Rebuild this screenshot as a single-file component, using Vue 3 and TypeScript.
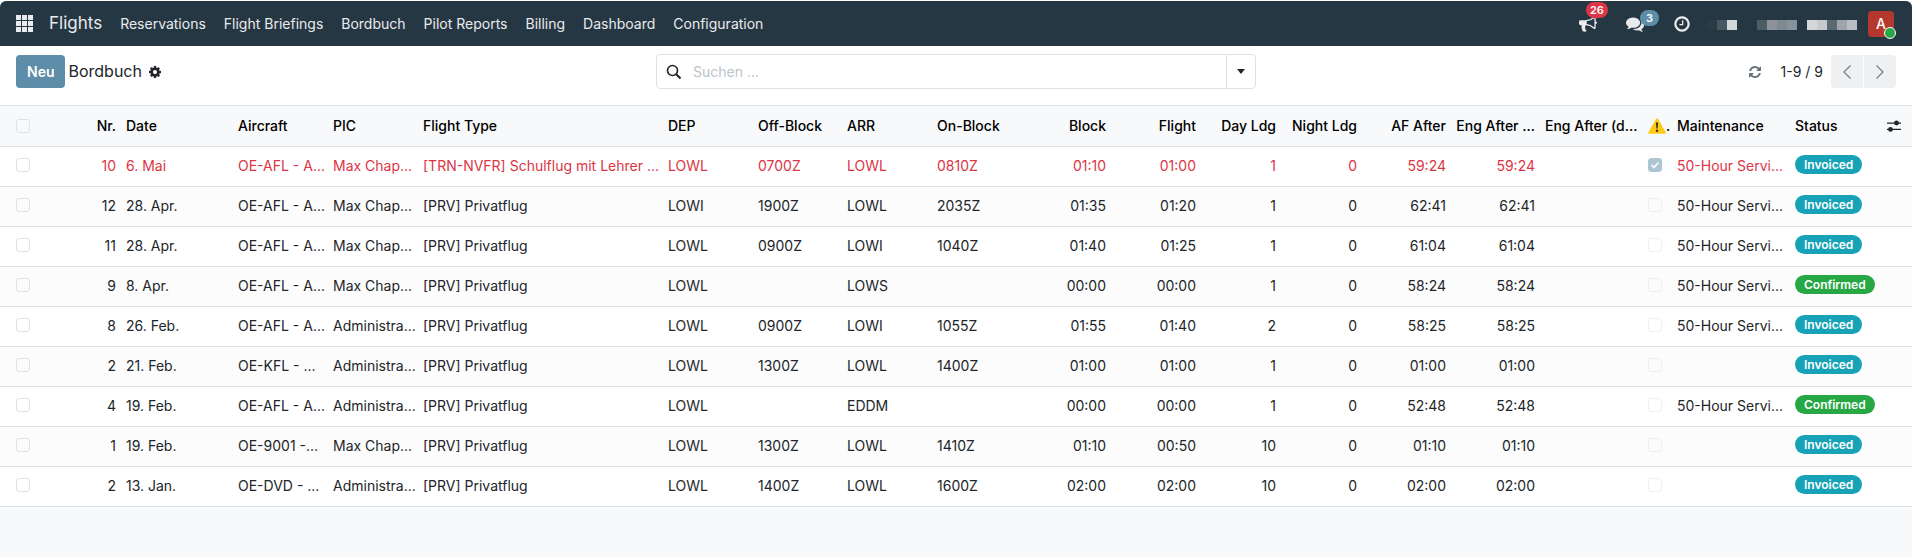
<script setup lang="ts">
import { ref } from 'vue'

interface Column {
  key: string
  label: string
  width: number
  end?: boolean
}

interface Flight {
  nr: number
  date: string
  aircraft: string
  pic: string
  type: string
  dep: string
  off: string
  arr: string
  on: string
  block: string
  flight: string
  day: number
  night: number
  af: string
  eng: string
  warn: boolean
  maintenance: string
  status: 'Invoiced' | 'Confirmed'
}

const menu = ['Reservations', 'Flight Briefings', 'Bordbuch', 'Pilot Reports', 'Billing', 'Dashboard', 'Configuration']

const columns: Column[] = [
  { key: 'nr', label: 'Nr.', width: 81, end: true },
  { key: 'date', label: 'Date', width: 112 },
  { key: 'aircraft', label: 'Aircraft', width: 95 },
  { key: 'pic', label: 'PIC', width: 90 },
  { key: 'type', label: 'Flight Type', width: 245 },
  { key: 'dep', label: 'DEP', width: 90 },
  { key: 'off', label: 'Off-Block', width: 89 },
  { key: 'arr', label: 'ARR', width: 90 },
  { key: 'on', label: 'On-Block', width: 90 },
  { key: 'block', label: 'Block', width: 89, end: true },
  { key: 'flight', label: 'Flight', width: 90, end: true },
  { key: 'day', label: 'Day Ldg', width: 80, end: true },
  { key: 'night', label: 'Night Ldg', width: 81, end: true },
  { key: 'af', label: 'AF After', width: 89, end: true },
  { key: 'eng', label: 'Eng After ...', width: 89, end: true },
  { key: 'engDual', label: 'Eng After (d...', width: 102, end: true },
  { key: 'warn', label: '', width: 30 },
  { key: 'maintenance', label: 'Maintenance', width: 118 },
  { key: 'status', label: 'Status', width: 90 },
]

const administrator = 'Administra...'
const max = 'Max Chap...'
const privat = '[PRV] Privatflug'
const afl = 'OE-AFL - A...'
const service = '50-Hour Servi...'

const flights: Flight[] = [
  { nr: 10, date: '6. Mai', aircraft: afl, pic: max, type: '[TRN-NVFR] Schulflug mit Lehrer ...', dep: 'LOWL', off: '0700Z', arr: 'LOWL', on: '0810Z', block: '01:10', flight: '01:00', day: 1, night: 0, af: '59:24', eng: '59:24', warn: true, maintenance: service, status: 'Invoiced' },
  { nr: 12, date: '28. Apr.', aircraft: afl, pic: max, type: privat, dep: 'LOWI', off: '1900Z', arr: 'LOWL', on: '2035Z', block: '01:35', flight: '01:20', day: 1, night: 0, af: '62:41', eng: '62:41', warn: false, maintenance: service, status: 'Invoiced' },
  { nr: 11, date: '28. Apr.', aircraft: afl, pic: max, type: privat, dep: 'LOWL', off: '0900Z', arr: 'LOWI', on: '1040Z', block: '01:40', flight: '01:25', day: 1, night: 0, af: '61:04', eng: '61:04', warn: false, maintenance: service, status: 'Invoiced' },
  { nr: 9, date: '8. Apr.', aircraft: afl, pic: max, type: privat, dep: 'LOWL', off: '', arr: 'LOWS', on: '', block: '00:00', flight: '00:00', day: 1, night: 0, af: '58:24', eng: '58:24', warn: false, maintenance: service, status: 'Confirmed' },
  { nr: 8, date: '26. Feb.', aircraft: afl, pic: administrator, type: privat, dep: 'LOWL', off: '0900Z', arr: 'LOWI', on: '1055Z', block: '01:55', flight: '01:40', day: 2, night: 0, af: '58:25', eng: '58:25', warn: false, maintenance: service, status: 'Invoiced' },
  { nr: 2, date: '21. Feb.', aircraft: 'OE-KFL - ...', pic: administrator, type: privat, dep: 'LOWL', off: '1300Z', arr: 'LOWL', on: '1400Z', block: '01:00', flight: '01:00', day: 1, night: 0, af: '01:00', eng: '01:00', warn: false, maintenance: '', status: 'Invoiced' },
  { nr: 4, date: '19. Feb.', aircraft: afl, pic: administrator, type: privat, dep: 'LOWL', off: '', arr: 'EDDM', on: '', block: '00:00', flight: '00:00', day: 1, night: 0, af: '52:48', eng: '52:48', warn: false, maintenance: service, status: 'Confirmed' },
  { nr: 1, date: '19. Feb.', aircraft: 'OE-9001 -...', pic: max, type: privat, dep: 'LOWL', off: '1300Z', arr: 'LOWL', on: '1410Z', block: '01:10', flight: '00:50', day: 10, night: 0, af: '01:10', eng: '01:10', warn: false, maintenance: '', status: 'Invoiced' },
  { nr: 2, date: '13. Jan.', aircraft: 'OE-DVD - ...', pic: administrator, type: privat, dep: 'LOWL', off: '1400Z', arr: 'LOWL', on: '1600Z', block: '02:00', flight: '02:00', day: 10, night: 0, af: '02:00', eng: '02:00', warn: false, maintenance: '', status: 'Invoiced' },
]

const query = ref('')
</script>

<template>
  <div class="page">
    <header class="navbar">
      <button class="icon-btn apps" aria-label="Apps">
        <svg width="17" height="17" viewBox="0 0 17 17" fill="currentColor">
          <template v-for="r in 3" :key="r">
            <rect v-for="c in 3" :key="c" :x="(c - 1) * 6" :y="(r - 1) * 6" width="5" height="5" />
          </template>
        </svg>
      </button>
      <a class="brand" href="#">Flights</a>
      <nav class="menu">
        <a v-for="item in menu" :key="item" href="#">{{ item }}</a>
      </nav>
      <div class="systray">
        <button class="icon-btn tray" aria-label="Announcements">
          <svg width="18" height="18" viewBox="0 0 1792 1792" fill="currentColor"><path d="M1664 640q53 0 90.500 37.500t37.500 90.500-37.500 90.500-90.500 37.500v384q0 52-38 90t-90 38q-417-347-812-380-58 19-91 66t-31 100.500 40 92.500q-20 33-23 65.500t6 58 33.500 55 48 50 61.500 50.500q-29 58-111.500 83t-168.500 11.500-132-55.500q-7-23-29.500-87.500t-32-94.500-23-89-15-101 3.500-98.500 22-110.500h-122q-66 0-113-47t-47-113v-192q0-66 47-113t113-47h480q435 0 896-384 52 0 90 38t38 90v384zm-128 604v-954q-394 302-768 343v270q377 42 768 341z" /></svg>
          <span class="count red">26</span>
        </button>
        <button class="icon-btn tray" aria-label="Messages">
          <svg width="18" height="18" viewBox="0 0 1792 1792" fill="currentColor"><path d="M1408 768q0 139-94 257t-256.500 186.500-353.500 68.500q-86 0-176-16-124 88-278 128-36 9-86 16h-3q-11 0-20.500-8t-11.500-21q-1-3-1-6.500t.5-6.500 2-6l2.500-5 3.500-5.500 4-5 4.500-5 4-4.500q5-6 23-25t26-29.500 22.500-29 25-38.500 20.500-44q-124-72-195-177t-71-224q0-139 94-257t256.500-186.500 353.500-68.500 353.500 68.500 256.500 186.500 94 257zm384 256q0 120-71 224.500t-195 176.500q10 24 20.500 44t25 38.500 22.500 29 26 29.500 23 25q1 1 4 4.500t4.500 5 4 5 3.500 5.500l2.500 5 2 6 .5 6.500-1 6.500q-3 14-13 22t-22 7q-50-7-86-16-154-40-278-128-90 16-176 16-271 0-472-132 58 4 88 4 161 0 309-45t264-129q125-92 192-212t67-254q0-77-23-152 129 71 204 178t75 230z" /></svg>
          <span class="count blue">3</span>
        </button>
        <button class="icon-btn tray" aria-label="Activities">
          <svg width="18" height="18" viewBox="0 0 1792 1792" fill="currentColor"><path d="M1024 544v448q0 14-9 23t-23 9h-320q-14 0-23-9t-9-23v-64q0-14 9-23t23-9h224v-352q0-14 9-23t23-9h64q14 0 23 9t9 23zm416 352q0-148-73-273t-198-198-273-73-273 73-198 198-73 273 73 273 198 198 273 73 273-73 198-198 73-273zm224 0q0 209-103 385.500t-279.500 279.500-385.500 103-385.500-103-279.500-279.500-103-385.500 103-385.500 279.500-279.500 385.500-103 385.500 103 279.500 279.500 103 385.500z" /></svg>
        </button>
        <svg class="redacted" width="150" height="10" viewBox="0 0 150 10" shape-rendering="crispEdges" aria-hidden="true">
          <rect x="0" width="10" height="10" fill="#2a3a46" />
          <rect x="10" width="10" height="10" fill="#475860" />
          <rect x="20" width="10" height="10" fill="#d2d7d9" />
          <rect x="50" width="10" height="10" fill="#4d5d66" />
          <rect x="60" width="10" height="10" fill="#8e939b" />
          <rect x="70" width="10" height="10" fill="#7f8a90" />
          <rect x="80" width="10" height="10" fill="#87929a" />
          <rect x="100" width="10" height="10" fill="#d4d6da" />
          <rect x="110" width="10" height="10" fill="#c5cacd" />
          <rect x="120" width="10" height="10" fill="#5a6972" />
          <rect x="130" width="10" height="10" fill="#9fa5ad" />
          <rect x="140" width="10" height="10" fill="#b9bec3" />
        </svg>
        <button class="avatar" aria-label="User menu">A<span class="online"></span></button>
      </div>
    </header>

    <section class="control">
      <div class="left">
        <button class="new">Neu</button>
        <span class="title">Bordbuch</span>
        <button class="icon-btn gear" aria-label="Actions">
          <svg width="14" height="14" viewBox="0 0 1792 1792" fill="currentColor"><path d="M1152 896q0-106-75-181t-181-75-181 75-75 181 75 181 181 75 181-75 75-181zm512-109v222q0 12-8 23t-20 13l-185 28q-19 54-39 91 35 50 107 138 10 12 10 25t-9 23q-27 37-99 108t-94 71q-12 0-26-9l-138-108q-44 23-91 38-16 136-29 186-7 28-36 28h-222q-14 0-24.500-8.500t-11.500-21.500l-28-184q-49-16-90-37l-141 107q-10 9-25 9-14 0-25-11-126-114-165-168-7-10-7-23 0-12 8-23 15-21 51-66.500t54-70.500q-27-50-41-99l-183-27q-13-2-21-12.500t-8-23.500v-222q0-12 8-23t19-13l186-28q14-46 39-92-40-57-107-138-10-12-10-24 0-10 9-23 26-36 98.500-107.500t94.500-71.500q13 0 26 10l138 107q44-23 91-38 16-136 29-186 7-28 36-28h222q14 0 24.500 8.500t11.500 21.500l28 184q49 16 90 37l142-107q9-9 24-9 13 0 25 10 129 119 165 170 7 8 7 22 0 12-8 23-15 21-51 66.500t-54 70.500q26 50 41 98l183 28q13 2 21 12.500t8 23.500z" /></svg>
        </button>
      </div>
      <div class="search">
        <label class="field">
          <svg width="16" height="16" viewBox="0 0 16 16" fill="none" stroke="#212529" stroke-width="1.600"><circle cx="6.500" cy="6.500" r="5" /><path d="M10.200 10.200 14.500 14.500" stroke-width="2" /></svg>
          <input v-model="query" type="text" placeholder="Suchen ..." aria-label="Suchen" />
        </label>
        <button class="toggle" aria-label="Toggle search panel">
          <svg width="8" height="5" viewBox="0 0 8 5"><path d="M0 0h8L4 5z" fill="#212529" /></svg>
        </button>
      </div>
      <div class="pager">
        <button class="icon-btn refresh" aria-label="Refresh">
          <svg width="14" height="14" viewBox="0 0 1792 1792" fill="currentColor"><path d="M1639 1056q0 5-1 7-64 268-268 434.500t-478 166.500q-146 0-282.500-55t-243.500-157l-129 129q-19 19-45 19t-45-19-19-45v-448q0-26 19-45t45-19h448q26 0 45 19t19 45-19 45l-137 137q71 66 161 102t187 36q134 0 250-65t186-179q11-17 53-117 8-23 30-23h192q13 0 22.500 9.500t9.500 22.500zm25-800v448q0 26-19 45t-45 19h-448q-26 0-45-19t-19-45 19-45l138-138q-148-137-349-137-134 0-250 65t-186 179q-11 17-53 117-8 23-30 23h-199q-13 0-22.500-9.500t-9.500-22.500v-7q65-268 270-434.500t480-166.500q146 0 284 55.500t245 156.500l130-129q19-19 45-19t45 19 19 45z" /></svg>
        </button>
        <span class="range">1-9 / 9</span>
        <div class="arrows">
          <button aria-label="Previous">
            <svg width="8" height="14" viewBox="0 0 8 14" fill="none" stroke="currentColor" stroke-width="1.300"><path d="M7.500.5 1 7l6.500 6.500" /></svg>
          </button>
          <button aria-label="Next">
            <svg width="8" height="14" viewBox="0 0 8 14" fill="none" stroke="currentColor" stroke-width="1.300"><path d="M.5.5 7 7 .5 13.500" /></svg>
          </button>
        </div>
      </div>
    </section>

    <table class="list">
      <colgroup>
        <col width="40" />
        <col v-for="c in columns" :key="c.key" :width="c.width" />
        <col width="32" />
      </colgroup>
      <thead>
        <tr>
          <th class="select"><input type="checkbox" aria-label="Select all" /></th>
          <th v-for="c in columns" :key="c.key" :class="{ end: c.end, warn: c.key === 'warn' }">
            <span v-if="c.key === 'warn'" class="warn-head">
              <svg width="18" height="16" viewBox="0 0 18 16" role="img" aria-label="Warning">
                <path d="M9 1.200 16.800 14.800H1.200z" fill="#fdcb14" stroke="#fdcb14" stroke-width="2" stroke-linejoin="round" />
                <path d="M7.900 4.500h2.200l-.5 6H8.400z" fill="#3a3326" />
                <circle cx="9" cy="12.700" r="1.200" fill="#3a3326" />
              </svg>.
            </span>
            <template v-else>{{ c.label }}</template>
          </th>
          <th class="options">
            <button class="icon-btn" aria-label="Optional columns">
              <svg width="16" height="12" viewBox="0 0 16 12" fill="#212529"><path d="M1 2.500h14v1.200H1zM1 8.800h14V10H1z" /><circle cx="10.500" cy="3" r="2.400" /><circle cx="4.500" cy="9.400" r="2.400" /></svg>
            </button>
          </th>
        </tr>
      </thead>
      <tbody>
        <tr v-for="(f, i) in flights" :key="i" :class="{ danger: f.warn }">
          <td class="select"><input type="checkbox" :aria-label="`Select flight ${f.nr}`" /></td>
          <td class="end">{{ f.nr }}</td>
          <td>{{ f.date }}</td>
          <td>{{ f.aircraft }}</td>
          <td>{{ f.pic }}</td>
          <td>{{ f.type }}</td>
          <td>{{ f.dep }}</td>
          <td>{{ f.off }}</td>
          <td>{{ f.arr }}</td>
          <td>{{ f.on }}</td>
          <td class="end">{{ f.block }}</td>
          <td class="end">{{ f.flight }}</td>
          <td class="end">{{ f.day }}</td>
          <td class="end">{{ f.night }}</td>
          <td class="end">{{ f.af }}</td>
          <td class="end">{{ f.eng }}</td>
          <td></td>
          <td class="warn"><input type="checkbox" disabled :checked="f.warn" aria-label="Warning" /></td>
          <td>{{ f.maintenance }}</td>
          <td class="state"><span class="pill" :class="f.status.toLowerCase()">{{ f.status }}</span></td>
          <td></td>
        </tr>
      </tbody>
    </table>
  </div>
</template>

<style>
html,
body {
  margin: 0;
  background: #f8f9fa;
}
</style>

<style scoped>
.page {
  font: 14px/21px Inter, "Liberation Sans", sans-serif;
  color: #212529;
  border-top: 1px solid #fff;
}

button,
input {
  font: inherit;
  margin: 0;
}

button {
  cursor: pointer;
}

a {
  color: inherit;
  text-decoration: none;
}

svg {
  display: block;
}

.icon-btn {
  display: flex;
  align-items: center;
  padding: 0;
  border: 0;
  background: none;
  color: inherit;
}

.navbar {
  display: flex;
  align-items: center;
  height: 45px;
  padding: 0 18px 0 16px;
  border-radius: 6px 6px 0 0;
  background: #263744;
  color: #e9ebec;
}

.brand {
  margin-left: 16px;
  font-size: 17px;
}

.menu {
  display: flex;
  gap: 18px;
  margin-left: 18px;
}

.brand,
.menu {
  padding-bottom: 1px;
}

.systray {
  display: flex;
  align-items: center;
  margin-left: auto;
}

.tray {
  position: relative;
  margin-right: 29px;
}

.tray:last-of-type {
  margin-right: 29px;
}

.tray:has(+ .redacted) {
  margin-right: 16px;
}

.count {
  position: absolute;
  left: 7px;
  top: -13px;
  padding: 0 4px;
  border-radius: 8px;
  color: #fff;
  font-size: 11px;
  font-weight: 600;
  line-height: 16px;
}

.count.blue {
  top: -5px;
  left: 14px;
  padding: 0 6px;
}

.red {
  background: #dc3545;
}

.blue {
  background: #5d8da8;
}

.redacted {
  margin: 2px 11px 0 0;
}

.avatar {
  position: relative;
  width: 26px;
  height: 26px;
  padding: 0;
  border: 0;
  border-radius: 4px;
  background: #b5382f;
  color: #fff;
  font-weight: 500;
}

.online {
  position: absolute;
  right: -2px;
  bottom: -2px;
  width: 10px;
  height: 10px;
  border: 1px solid #fff;
  border-radius: 50%;
  background: #28a745;
}

.control {
  display: grid;
  grid-template-columns: 1fr 600px 1fr;
  align-items: center;
  height: 59px;
  padding: 0 16px 8px;
  box-sizing: border-box;
  background: #fff;
}

.left {
  display: flex;
  align-items: center;
}

.new {
  height: 33px;
  padding: 0 11px;
  border: 0;
  border-radius: 4px;
  background: #5d8da8;
  color: #fff;
  font-weight: 600;
}

.title {
  margin: 0 6px 0 3px;
  font-size: 16px;
}

.search {
  display: flex;
  height: 35px;
  box-sizing: border-box;
  border: 1px solid #dee2e6;
  border-radius: 4px;
}

.field {
  display: flex;
  flex: 1;
  align-items: center;
  gap: 11px;
  padding-left: 9px;
}

.field input {
  flex: 1;
  padding: 0;
  border: 0;
  outline: 0;
  background: none;
  color: inherit;
}

.field input::placeholder {
  color: #bcc3ca;
  opacity: 1;
}

.toggle {
  display: flex;
  align-items: center;
  justify-content: center;
  width: 29px;
  padding: 0;
  border: 0;
  border-left: 1px solid #dee2e6;
  background: none;
}

.pager {
  display: flex;
  align-items: center;
  justify-content: flex-end;
}

.refresh {
  color: #6c757d;
}

.range {
  margin: 0 8px 0 19px;
}

.arrows {
  display: flex;
  gap: 1px;
}

.arrows button {
  display: flex;
  align-items: center;
  justify-content: center;
  width: 32px;
  height: 33px;
  padding: 0;
  border: 0;
  border-radius: 4px 0 0 4px;
  background: #eff0f2;
  color: #7c7f82;
}

.arrows button + button {
  border-radius: 0 4px 4px 0;
}

.list {
  width: 100%;
  table-layout: fixed;
  border-collapse: separate;
  border-spacing: 0;
}

th,
td {
  box-sizing: border-box;
  height: 40px;
  padding: 0 5px 2px;
  border-bottom: 1px solid #dee2e6;
  text-align: left;
  white-space: nowrap;
}

th {
  height: 42px;
  padding-bottom: 1px;
  border-top: 1px solid #dee2e6;
  background: #f8f9fa;
  color: #000;
  font-weight: 500;
}

tbody tr {
  background: #fff;
}

tbody tr:nth-child(even) {
  background: #fcfcfc;
}

.danger {
  color: #dc3545;
}

.end {
  text-align: right;
}

.select {
  padding-left: 16px;
}

.warn {
  padding-left: 6px;
  padding-right: 0;
}

.warn-head {
  display: flex;
  align-items: center;
}

.options .icon-btn {
  margin-left: 1px;
}

input[type="checkbox"] {
  display: block;
  width: 14px;
  height: 14px;
  box-sizing: border-box;
  appearance: none;
  border: 1px solid #dee2e6;
  border-radius: 3px;
}

td input[type="checkbox"] {
  margin-bottom: 1px;
}

input[type="checkbox"]:disabled {
  border-color: #eeeff1;
}

input[type="checkbox"]:checked {
  border-color: #aec6d3;
  background: #aec6d3 url("data:image/svg+xml,%3Csvg xmlns='http://www.w3.org/2000/svg' viewBox='0 0 14 14'%3E%3Cpath d='M3.500 7 6 9.300 10.300 4.800' fill='none' stroke='white' stroke-width='1.600'/%3E%3C/svg%3E") center / 14px no-repeat;
}

.state {
  line-height: 0;
}

.pill {
  display: inline-block;
  margin-bottom: 2px;
  padding: 0 9px;
  border-radius: 10px;
  color: #fff;
  font-size: 12px;
  font-weight: 600;
  line-height: 19px;
}

.invoiced {
  background: #17a2b8;
}

.confirmed {
  background: #28a745;
}
</style>
